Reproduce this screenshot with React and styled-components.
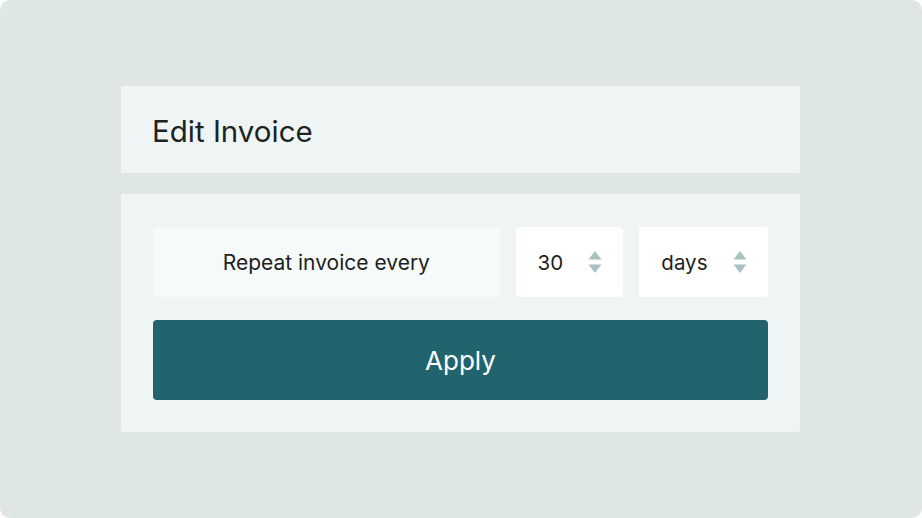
import React from 'react';
import styled, { createGlobalStyle } from 'styled-components';

const GlobalStyle = createGlobalStyle`
  html, body {
    margin: 0;
    padding: 0;
    background: #ffffff;
  }
  body {
    font-family: Inter, "Liberation Sans", sans-serif;
  }
`;

const Page = styled.div`
  width: 922px;
  height: 518px;
  box-sizing: border-box;
  background: #dfe7e5;
  border-radius: 10px;
  padding: 86px 122px 0 121px;
  display: flex;
  flex-direction: column;
  gap: 21px;
`;

const Panel = styled.div`
  background: #eff5f5;
  border-radius: 2px;
  box-sizing: border-box;
`;

const HeaderPanel = styled(Panel)`
  height: 87px;
  display: flex;
  align-items: center;
  padding: 2px 31px 0;
`;

const Title = styled.h1`
  margin: 0;
  font-size: 29.5px;
  font-weight: 400;
  color: #1d2222;
`;

const BodyPanel = styled(Panel)`
  padding: 33px 32px 32px;
  display: flex;
  flex-direction: column;
  gap: 23px;
`;

const Row = styled.div`
  display: flex;
  gap: 16px;
  height: 70px;
`;

const Field = styled.div`
  background: ${p => (p.muted ? '#f7fafb' : '#ffffff')};
  width: ${p => p.width}px;
  border-radius: 4px;
  display: flex;
  align-items: center;
  justify-content: ${p => (p.center ? 'center' : 'space-between')};
  padding: ${p => (p.center ? '0' : '0 21px 0 22px')};
  box-sizing: border-box;
  font-size: ${p => (p.center ? 21 : 20.5)}px;
  color: #1d2222;
`;

const Stepper = styled.svg`
  display: block;
`;

const Arrows = () => (
  <Stepper width="14" height="24" viewBox="0 0 14 24">
    <path d="M7 1 L13.5 9.5 L0.5 9.5 Z" fill="#a9c1c2" />
    <path d="M7 23 L13.5 14.5 L0.5 14.5 Z" fill="#a9c1c2" />
  </Stepper>
);

const ApplyButton = styled.button`
  height: 80px;
  border: none;
  border-radius: 4px;
  background: #22646e;
  color: #ffffff;
  font-family: Inter, "Liberation Sans", sans-serif;
  font-size: 26px;
  font-weight: 400;
  cursor: pointer;
`;

const App = () => (
  <>
    <GlobalStyle />
    <Page>
      <HeaderPanel>
        <Title>Edit Invoice</Title>
      </HeaderPanel>
      <BodyPanel>
        <Row>
          <Field muted center width={348}>Repeat invoice every</Field>
          <Field width={108}>
            30
            <Arrows />
          </Field>
          <Field width={129}>
            days
            <Arrows />
          </Field>
        </Row>
        <ApplyButton>Apply</ApplyButton>
      </BodyPanel>
    </Page>
  </>
);

export default App;
